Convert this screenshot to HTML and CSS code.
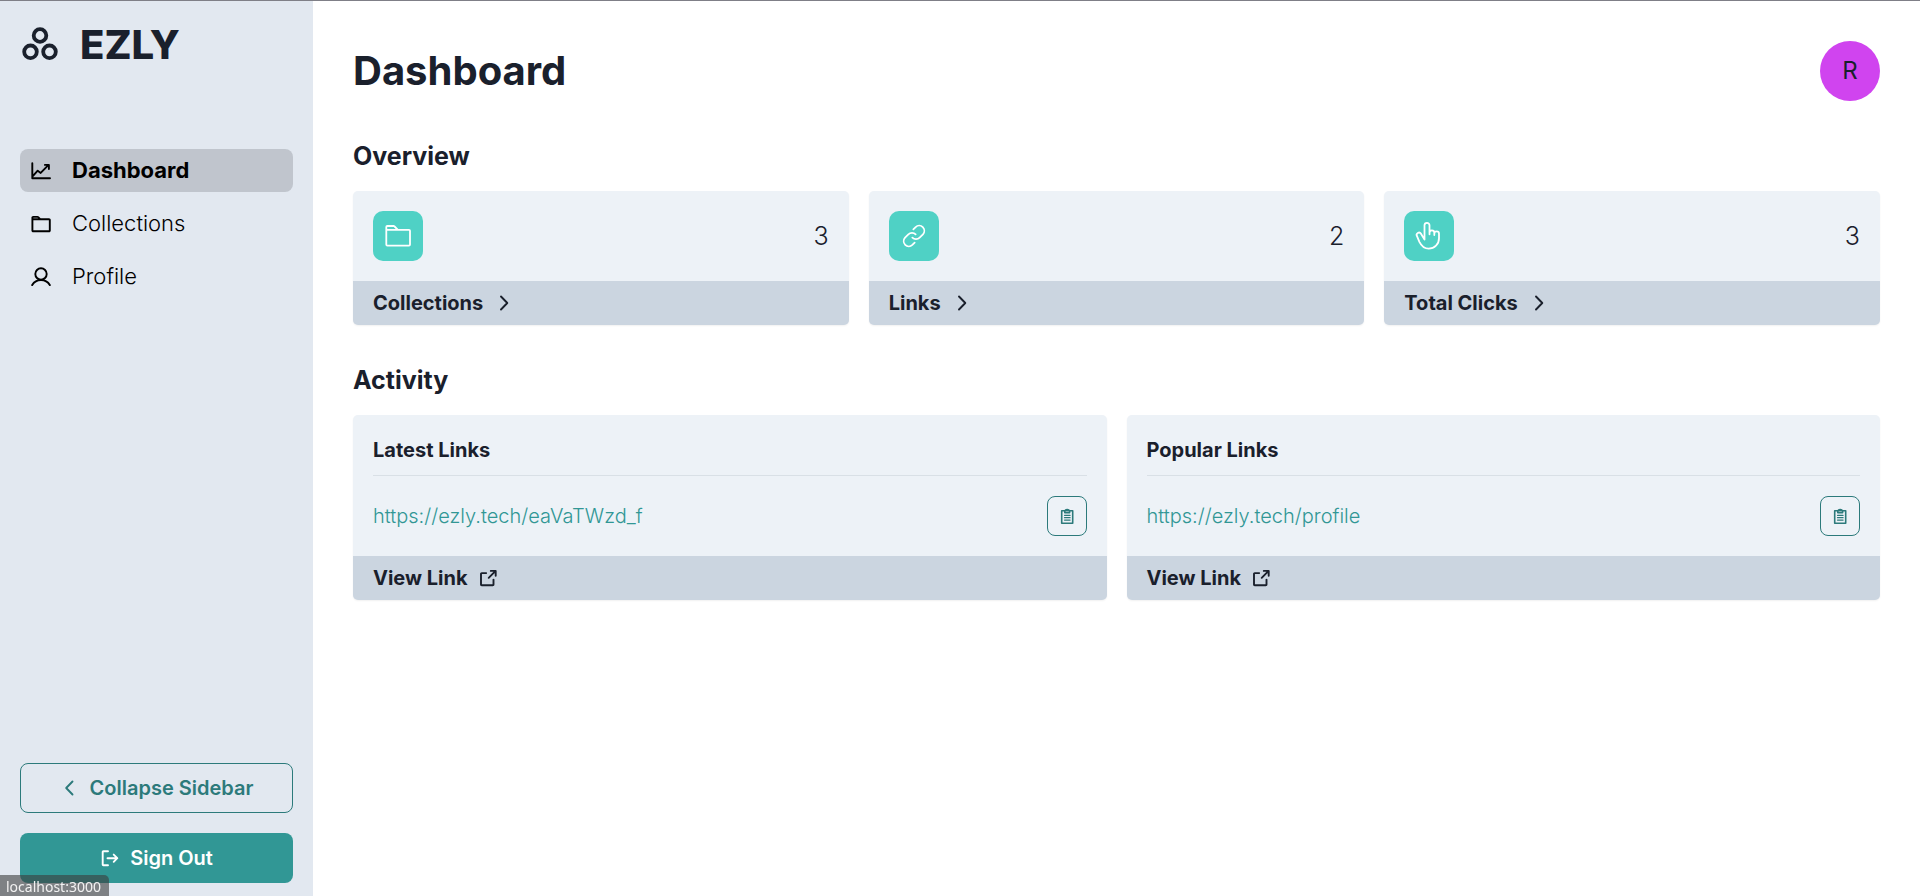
FILE: index.html
```html
<!DOCTYPE html>
<html lang="en">
<head>
<meta charset="utf-8">
<meta name="viewport" content="width=device-width, initial-scale=1">
<title>Ezly – Dashboard</title>
<link rel="stylesheet" href="styles.css">
</head>
<body>
<div class="app">
  <aside class="sidebar">
    <a class="brand" href="#">
      <svg class="brand-mark" viewBox="0 0 40 40" aria-hidden="true"><circle cx="20" cy="10.5" r="6.3"/><circle cx="10.5" cy="26.8" r="6.3"/><circle cx="29.5" cy="26.8" r="6.3"/></svg>
      <span>EZLY</span>
    </a>
    <nav class="nav">
      <a class="nav-item active" href="#">
        <svg class="nav-icon" viewBox="0 0 21 21" aria-hidden="true"><path d="M2.300 3.300v15H20M2.800 16.200l4.900-5.500 3 2.200L18.300 5.200M14.900 4.900h4v4.200"/></svg>
        <span>Dashboard</span>
      </a>
      <a class="nav-item" href="#">
        <svg class="nav-icon" viewBox="0 0 21 21" aria-hidden="true"><path d="M2.400 6.200V4.600a.7.700 0 0 1 .7-.7h4.400a1 1 0 0 1 .7.300l2 2M2.400 6.200H19a.8.800 0 0 1 .8.800v10.400a.8.800 0 0 1-.8.800H3.200a.8.800 0 0 1-.8-.8z"/></svg>
        <span>Collections</span>
      </a>
      <a class="nav-item" href="#">
        <svg class="nav-icon" viewBox="0 0 21 21" aria-hidden="true"><circle cx="11" cy="8" r="5.700"/><path d="M2.200 19.100a10.200 10.200 0 0 1 17.600 0"/></svg>
        <span>Profile</span>
      </a>
    </nav>
    <div class="sidebar-actions">
      <button class="button outline" type="button">
        <svg class="icon" viewBox="0 0 20 20" aria-hidden="true"><path d="M12.500 3.500 6.200 10l6.300 6.500"/></svg>
        Collapse Sidebar
      </button>
      <button class="button solid" type="button">
        <svg class="icon" viewBox="0 0 20 20" aria-hidden="true"><path d="M8 3.200H3.300a.6.600 0 0 0-.6.600v12.800a.6.600 0 0 0 .6.600H8M7.500 10.200h9.800M13.700 6.600l3.600 3.600-3.600 3.600"/></svg>
        Sign Out
      </button>
    </div>
  </aside>

  <main class="main">
    <header class="page-header">
      <h1>Dashboard</h1>
      <button class="avatar" type="button" aria-label="Account">R</button>
    </header>

    <section class="section">
      <h2>Overview</h2>
      <div class="grid stats">
        <article class="card">
          <div class="stat">
            <span class="tile"><svg viewBox="0 0 30 30" aria-hidden="true"><path d="M3.300 8.800V6a1 1 0 0 1 1-1h6.200a1.600 1.600 0 0 1 1.100.5l3.300 3.300M3.300 8.800H26a1 1 0 0 1 1 1v13.800a1 1 0 0 1-1 1H4.300a1 1 0 0 1-1-1z"/></svg></span>
            <span class="count">3</span>
          </div>
          <a class="card-footer" href="#">Collections <svg class="icon" viewBox="0 0 20 20" aria-hidden="true"><path d="m8 3.500 6.300 6.500L8 16.500"/></svg></a>
        </article>
        <article class="card">
          <div class="stat">
            <span class="tile"><svg viewBox="0 0 256 256" aria-hidden="true"><g stroke-width="15"><path d="M122.300 71.400l19.800-19.800a44.100 44.100 0 0 1 62.300 62.300l-28.300 28.200a43.900 43.900 0 0 1-62.200 0"/><path d="M133.700 184.600l-19.800 19.800a44.100 44.100 0 0 1-62.300-62.300l28.300-28.200a43.900 43.900 0 0 1 62.200 0"/></g></svg></span>
            <span class="count">2</span>
          </div>
          <a class="card-footer" href="#">Links <svg class="icon" viewBox="0 0 20 20" aria-hidden="true"><path d="m8 3.500 6.300 6.500L8 16.500"/></svg></a>
        </article>
        <article class="card">
          <div class="stat">
            <span class="tile"><svg viewBox="0 0 30 30" aria-hidden="true"><path d="M10.500 18.600V4.300a2.500 2.500 0 0 1 5 0v9M15.500 12.500v-.8a2.400 2.400 0 0 1 4.800 0v2.300M20.300 13v-.2a2.300 2.300 0 0 1 4.700 0v4.400a10.300 10.300 0 0 1-10.300 10.400c-5 0-7.300-2.800-9.300-6.800L3 15.200a2.300 2.300 0 0 1 4-2.400l3.500 5.800"/></svg></span>
            <span class="count">3</span>
          </div>
          <a class="card-footer" href="#">Total Clicks <svg class="icon" viewBox="0 0 20 20" aria-hidden="true"><path d="m8 3.500 6.300 6.500L8 16.500"/></svg></a>
        </article>
      </div>
    </section>

    <section class="section">
      <h2>Activity</h2>
      <div class="grid activity">
        <article class="card">
          <div class="card-body">
            <h3>Latest Links</h3>
            <div class="link-row">
              <a class="short-link" href="#">https://ezly.tech/eaVaTWzd_f</a>
              <button class="copy" type="button" aria-label="Copy link"><svg class="icon" viewBox="0 0 20 20" aria-hidden="true"><path d="M4.700 4.700h11v12.600h-11zM7.800 4.700v2h4.800v-2"/><path d="M8.500 4a2 1.200 0 0 1 3.400 0"/><path stroke-width="1.200" d="M7.500 9.300h5.600M7.500 11.700h5.600M7.500 14.100h5.600"/></svg></button>
            </div>
          </div>
          <a class="card-footer" href="#">View Link <svg class="icon" viewBox="0 0 20 20" aria-hidden="true"><path d="M8.200 5.100H3.700a.7.700 0 0 0-.7.700v10.800a.7.700 0 0 0 .7.700h11.100a.7.700 0 0 0 .7-.7v-5M10.700 9.800l6.900-6.900M12.800 2.900h4.900v4.800"/></svg></a>
        </article>
        <article class="card">
          <div class="card-body">
            <h3>Popular Links</h3>
            <div class="link-row">
              <a class="short-link" href="#">https://ezly.tech/profile</a>
              <button class="copy" type="button" aria-label="Copy link"><svg class="icon" viewBox="0 0 20 20" aria-hidden="true"><path d="M4.700 4.700h11v12.600h-11zM7.800 4.700v2h4.800v-2"/><path d="M8.500 4a2 1.200 0 0 1 3.400 0"/><path stroke-width="1.200" d="M7.500 9.300h5.600M7.500 11.700h5.600M7.500 14.100h5.600"/></svg></button>
            </div>
          </div>
          <a class="card-footer" href="#">View Link <svg class="icon" viewBox="0 0 20 20" aria-hidden="true"><path d="M8.200 5.100H3.700a.7.700 0 0 0-.7.700v10.800a.7.700 0 0 0 .7.700h11.100a.7.700 0 0 0 .7-.7v-5M10.700 9.800l6.900-6.900M12.800 2.900h4.900v4.800"/></svg></a>
        </article>
      </div>
    </section>
  </main>
</div>
<div class="status">localhost:3000</div>
</body>
</html>
```

FILE: styles.css
```css
* { box-sizing: border-box; margin: 0; padding: 0; }

body {
  font-family: Inter, "Liberation Sans", sans-serif;
  font-size: 20px;
  line-height: 30px;
  color: #1a202c;
  background: #fff;
}

a { color: inherit; text-decoration: none; }
button { font: inherit; color: inherit; border: 0; background: none; cursor: pointer; }

svg {
  display: block;
  flex: none;
  fill: none;
  stroke: currentColor;
  stroke-linecap: round;
  stroke-linejoin: round;
}

.icon { width: 20px; height: 20px; stroke-width: 1.9; }

.app {
  display: flex;
  min-height: 100vh;
  border-top: 1px solid #7f7f87;
}

.sidebar {
  display: flex;
  flex-direction: column;
  flex: none;
  width: 313px;
  padding: 20px 20px 13px;
  background: #e2e8f0;
}

.brand {
  display: flex;
  align-items: center;
  gap: 20px;
  margin-bottom: 80px;
  font-size: 40px;
  line-height: 48px;
  font-weight: 800;
}
.brand-mark { width: 40px; height: 40px; stroke-width: 3.8; }

.nav { display: flex; flex-direction: column; gap: 10px; }
.nav-item {
  display: flex;
  align-items: center;
  gap: 21px;
  padding: 5px 10px;
  border-radius: 8px;
  font-size: 22px;
  line-height: 33px;
  font-weight: 350;
  color: #000;
}
.nav-item.active { background: #c0c5cd; font-weight: 650; }
.nav-icon { width: 21px; height: 21px; stroke-width: 1.9; }

.sidebar-actions { display: flex; flex-direction: column; gap: 20px; margin-top: auto; }
.button {
  display: flex;
  align-items: center;
  justify-content: center;
  gap: 10px;
  height: 50px;
  border-radius: 8px;
  font-weight: 600;
}
.outline { border: 1px solid #2c7a7b; color: #2c7a7b; }
.solid { background: #319795; color: #fff; }

.main { flex: 1; min-width: 0; padding: 40px; }

.page-header { display: flex; align-items: center; justify-content: space-between; }
h1 { font-size: 40px; line-height: 48px; font-weight: 700; }
.avatar {
  width: 60px;
  height: 60px;
  border-radius: 50%;
  background: #d044ef;
  font-size: 24px;
}

.section { margin-top: 40px; }
h2 { margin-bottom: 20px; font-size: 25px; line-height: 30px; font-weight: 650; }

.grid { display: grid; gap: 20px; }
.stats { grid-template-columns: repeat(3, 1fr); }
.activity { grid-template-columns: repeat(2, 1fr); }

.card {
  overflow: hidden;
  border-radius: 5px;
  background: #edf2f7;
  box-shadow: 0 1px 2px rgba(0, 0, 0, 0.06);
}
.stat { display: flex; align-items: center; justify-content: space-between; padding: 20px; }
.tile {
  display: flex;
  align-items: center;
  justify-content: center;
  width: 50px;
  height: 50px;
  border-radius: 10px;
  background: #4fd1c5;
  color: #fff;
}
.tile svg { width: 30px; height: 30px; stroke-width: 1.8; }
.count { font-size: 25px; font-weight: 300; }

.card-footer {
  display: flex;
  align-items: center;
  gap: 10px;
  padding: 7px 20px;
  background: #cbd5e0;
  font-weight: 650;
}

.card-body { padding: 20px; }
h3 {
  padding-bottom: 10px;
  border-bottom: 1px solid #d9e0e6;
  font-size: 20px;
  line-height: 30px;
  font-weight: 650;
}
.link-row { display: flex; align-items: center; justify-content: space-between; padding-top: 20px; }
.short-link { color: #319795; font-weight: 350; }
.copy {
  display: flex;
  align-items: center;
  justify-content: center;
  width: 40px;
  height: 40px;
  border: 1px solid #2c7a7b;
  border-radius: 8px;
  color: #2c7a7b;
}
.copy .icon { stroke-width: 1.6; }

.status {
  position: fixed;
  left: 0;
  bottom: 0;
  padding: 3px 8px 0 6px;
  border-radius: 0 5px 0 0;
  background: rgba(60, 60, 60, 0.6);
  color: #f2f2f2;
  font-family: "Noto Sans", sans-serif;
  font-size: 14px;
  line-height: 18px;
}
```
